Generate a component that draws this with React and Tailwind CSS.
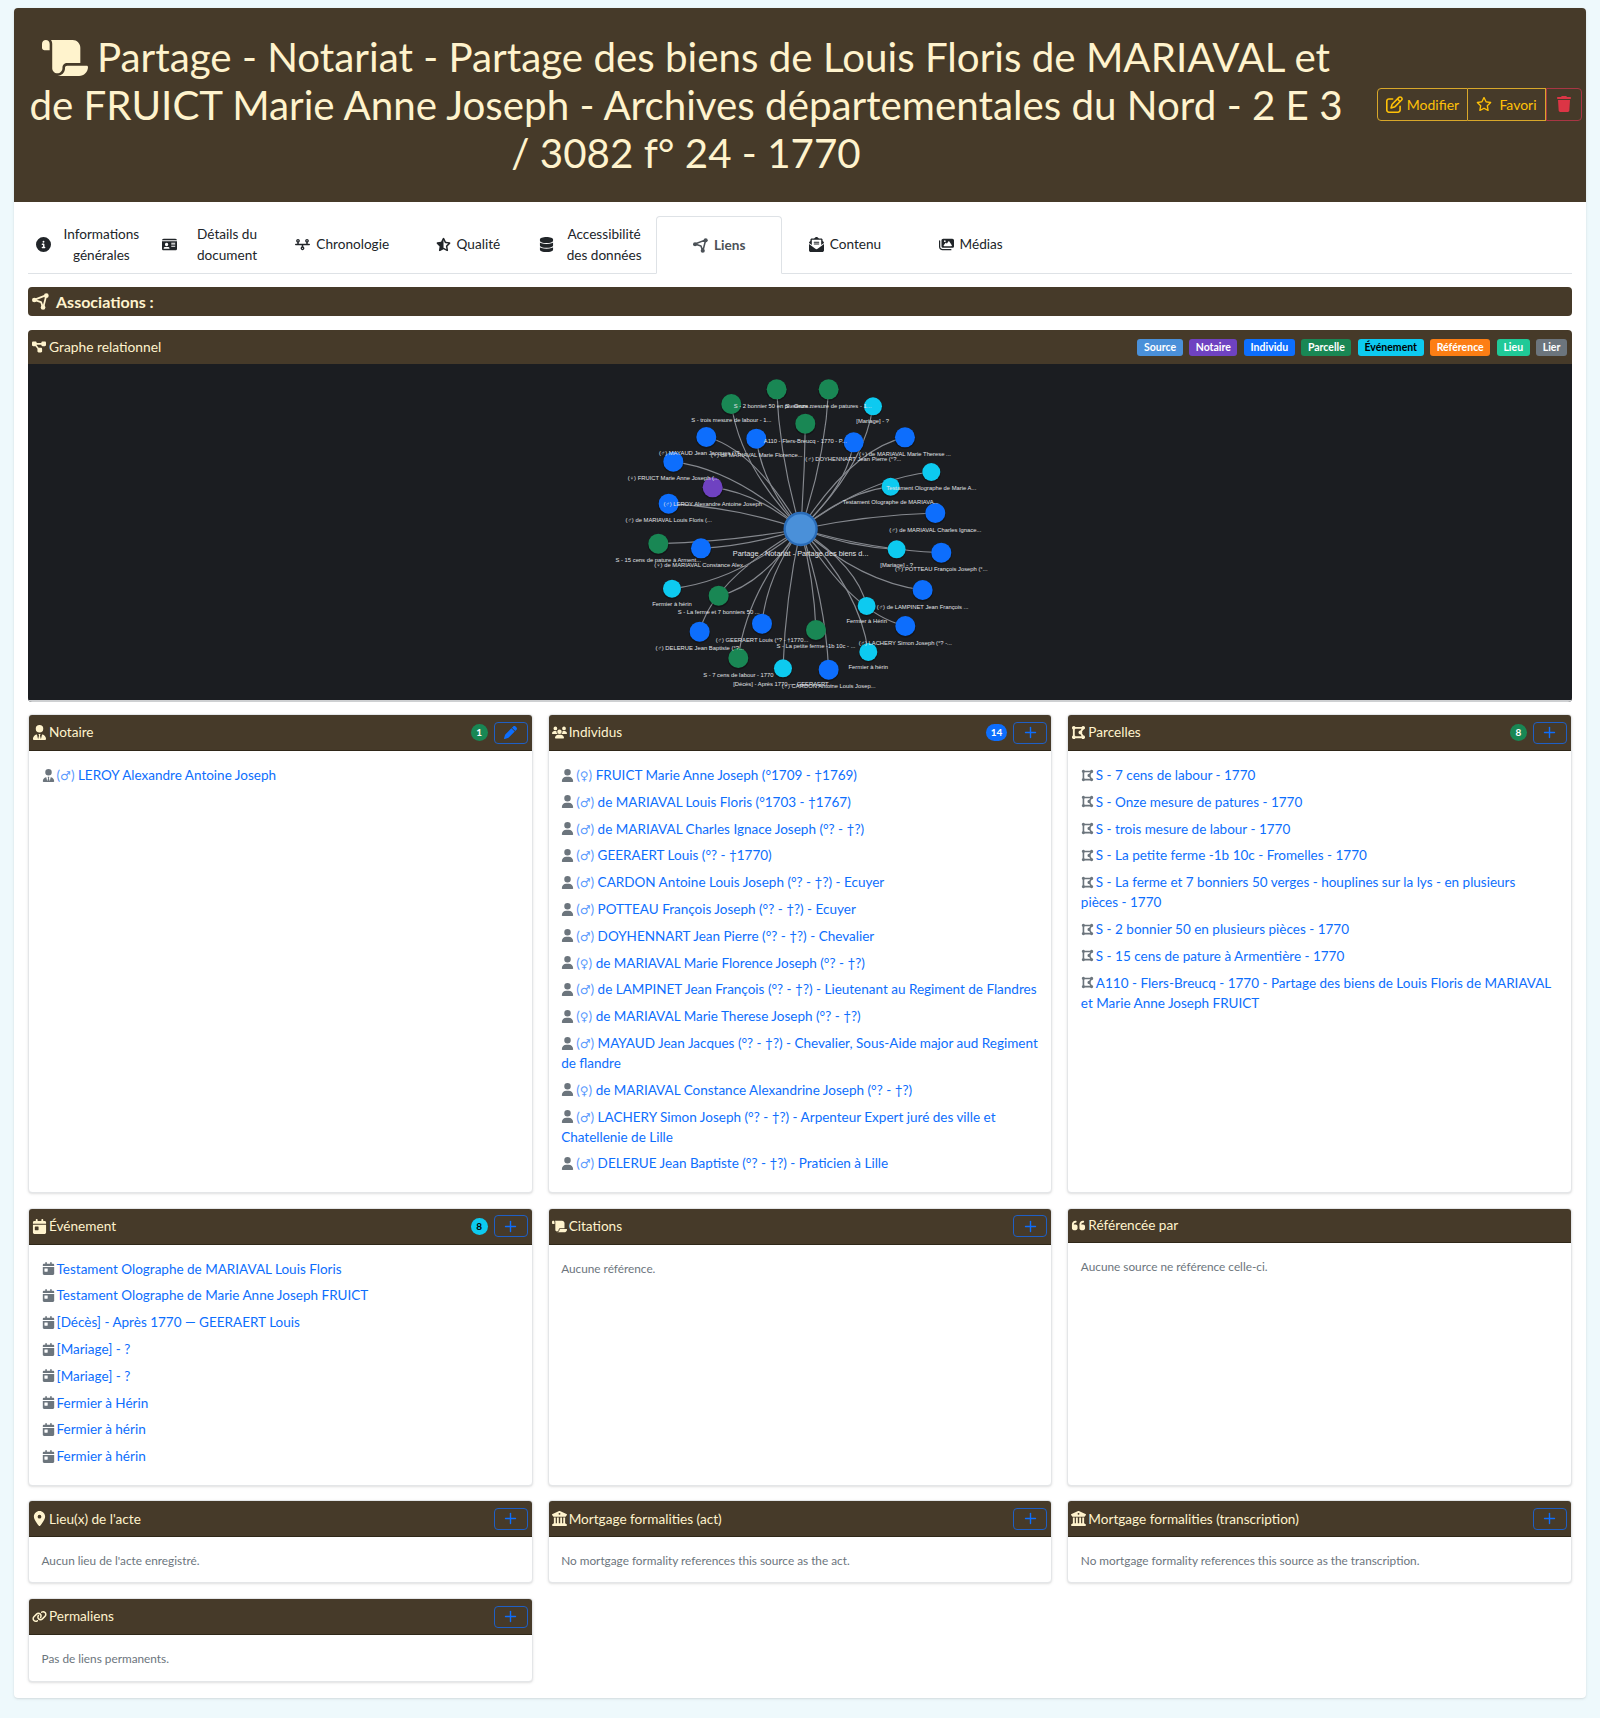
import {
  FaScroll, FaCircleInfo, FaIdCard, FaTimeline, FaStarHalfStroke, FaDatabase, FaDrawPolygon,
  FaEnvelopeOpenText, FaImages, FaDiagramProject, FaUserTie, FaUsers, FaUser, FaCalendarDay,
  FaQuoteLeft, FaLocationDot, FaBuildingColumns, FaLink, FaPen, FaTrash, FaRegStar, FaRegPenToSquare,
} from 'react-icons/fa6';
import { Plus } from 'lucide-react';

const sans = "font-['Lato','Open_Sans',sans-serif]";

// triangle with heavy corners, used for the "Liens" tab and section bar
const LinksIcon = ({ className = '' }) => (
  <svg className={className} width="1em" height="1em" viewBox="0 0 16 16" fill="none">
    <path d="M13.5 2 2 6.5l6.5 2 2 5.5z" stroke="currentColor" strokeWidth="1.7" strokeLinejoin="round" />
    <circle cx="13.5" cy="2.5" r="2.2" fill="currentColor" />
    <circle cx="2.2" cy="6.6" r="2.2" fill="currentColor" />
    <circle cx="10.4" cy="13.6" r="2.2" fill="currentColor" />
  </svg>
);

const tabs = [
  { icon: FaCircleInfo, label: ['Informations', 'générales'] },
  { icon: FaIdCard, label: ['Détails du', 'document'] },
  { icon: FaTimeline, label: ['Chronologie'] },
  { icon: FaStarHalfStroke, label: ['Qualité'] },
  { icon: FaDatabase, label: ['Accessibilité', 'des données'] },
  { icon: LinksIcon, label: ['Liens'], active: true },
  { icon: FaEnvelopeOpenText, label: ['Contenu'] },
  { icon: FaImages, label: ['Médias'] },
];

const badges = [
  ['Source', 'bg-[#4a90d9] text-white'],
  ['Notaire', 'bg-[#6f42c1] text-white'],
  ['Individu', 'bg-[#0d6efd] text-white'],
  ['Parcelle', 'bg-[#198754] text-white'],
  ['Événement', 'bg-[#0dcaf0] text-black'],
  ['Référence', 'bg-[#fd7e14] text-white'],
  ['Lieu', 'bg-[#20c997] text-white'],
  ['Lier', 'bg-[#6c757d] text-white'],
];

const BLUE = '#0d6efd';
const GREEN = '#198754';
const CYAN = '#0dcaf0';
const PURPLE = '#6f42c1';

// coordinates are in 3x units, relative to the graph crop
const nodes = [
  [530, 73, GREEN, 'S - 2 bonnier 50 en plusieurs...', 520, 122],
  [686, 73, GREEN, 'S - Onze mesure de patures - 1...', 685, 122],
  [394, 117, GREEN, 'S - trois mesure de labour - 1...', 394, 166],
  [819, 124, CYAN, '[Mariage] - ?', 818, 169],
  [616, 176, GREEN, 'A110 - Flers-Breucq - 1770 - P...', 616, 227],
  [319, 216, BLUE, '(♂) MAYAUD Jean Jacques (°?...', 305, 265],
  [469, 221, BLUE, '(♀) de MARIAVAL Marie Florence...', 470, 269],
  [761, 232, BLUE, '(♂) DOYHENNART Jean Pierre (°?...', 760, 283],
  [915, 217, BLUE, '(♀) de MARIAVAL Marie Therese ...', 915, 267],
  [220, 290, BLUE, '(♀) FRUICT Marie Anne Joseph (...', 220, 340],
  [994, 321, CYAN, 'Testament Olographe de Marie A...', 994, 368],
  [338, 367, PURPLE, '(♂) LEROY Alexandre Antoine Joseph', 338, 418],
  [872, 365, CYAN, 'Testament Olographe de MARIAVA...', 872, 411],
  [206, 416, BLUE, '(♂) de MARIAVAL Louis Floris (...', 206, 466],
  [1006, 444, BLUE, '(♂) de MARIAVAL Charles Ignace...', 1006, 494],
  [175, 536, GREEN, 'S - 15 cens de pature à Arment...', 175, 584],
  [303, 550, BLUE, '(♀) de MARIAVAL Constance Alex...', 303, 599],
  [890, 553, CYAN, '[Mariage] - ?', 890, 600],
  [1024, 563, BLUE, '(♂) POTTEAU François Joseph (°...', 1024, 612],
  [216, 671, CYAN, 'Fermier à hérin', 216, 717],
  [968, 675, BLUE, '(♂) de LAMPINET Jean François ...', 968, 725],
  [356, 692, GREEN, 'S - La ferme et 7 bonniers 50 ...', 356, 742],
  [800, 723, CYAN, 'Fermier à Hérin', 800, 768],
  [486, 776, BLUE, '(♂) GEERAERT Louis (°? - †1770...', 486, 826],
  [916, 783, BLUE, '(♂) LACHERY Simon Joseph (°? -...', 916, 833],
  [648, 795, GREEN, 'S - La petite ferme -1b 10c - ...', 648, 844],
  [299, 800, BLUE, '(♂) DELERUE Jean Baptiste (°?...', 299, 849],
  [805, 861, CYAN, 'Fermier à hérin', 805, 906],
  [415, 879, GREEN, 'S - 7 cens de labour - 1770', 415, 929],
  [549, 910, CYAN, '[Décès] - Après 1770 — GEERAERT...', 549, 957],
  [686, 914, BLUE, '(♂) CARDON Antoine Louis Josep...', 686, 964],
];

const CX = 602;
const CY = 492;

const edgePath = (x, y) => {
  const dx = CX - x;
  const dy = CY - y;
  const mx = x + dx / 2;
  const my = y + dy / 2;
  // edges leave the outer node along their dominant axis
  const ax = Math.abs(dx) > Math.abs(dy) ? mx : x;
  const ay = Math.abs(dx) > Math.abs(dy) ? y : my;
  const qx = mx * 0.25 + ax * 0.75;
  const qy = my * 0.25 + ay * 0.75;
  return `M${x} ${y} Q${qx} ${qy} ${CX} ${CY}`;
};

const Graph = () => (
  <svg className="block w-full h-[336px]" viewBox="0 0 1544 336">
    <g transform="translate(572 1) scale(0.3333)">
      {nodes.map(([x, y], i) => (
        <path key={i} d={edgePath(x, y)} fill="none" stroke="#85888e" strokeWidth="3.5" />
      ))}
      {nodes.map(([x, y, color], i) => (
        <g key={i}>
          <circle cx={x} cy={y + 3} r={color === CYAN ? 29 : 32} fill="#000" opacity="0.25" />
          <circle cx={x} cy={y} r={color === CYAN ? 27 : 30} fill={color} />
        </g>
      ))}
      <circle cx={CX} cy={CY} r="48" fill="#4a90d9" stroke="#2a6cb8" strokeWidth="7" />
      {nodes.map(([x, y, color, label, lx, ly], i) => (
        <text key={i} x={lx} y={ly + 6} textAnchor="middle" fontSize="17.5" fill="#e0e2e6" fontFamily="'Liberation Sans', 'DejaVu Sans', sans-serif">
          {label}
        </text>
      ))}
      <text x={CX} y={573} textAnchor="middle" fontSize="22" fill="#e4e6ea" fontFamily="'Liberation Sans', sans-serif">
        Partage - Notariat - Partage des biens d...
      </text>
    </g>
  </svg>
);

const Sex = ({ s = '♂' }) => (
  <span className="opacity-70">
    (<span className="font-['DejaVu_Sans',sans-serif] text-[12px] leading-[0]">{s}</span>)
  </span>
);

const LinkRow = ({ icon: Icon, children }) => (
  <li className="mb-[6.8px] leading-5 text-[#0d6efd]">
    <Icon className="inline-block mr-[2px] -mt-[3px] text-[13px] text-[#6c757d]" />
    {children}
  </li>
);

const AddBtn = ({ pen }) => (
  <span className="flex items-center justify-center w-[34px] h-[22px] rounded border border-[#1f5fc4] text-[#0d6efd]">
    {pen ? <FaPen className="text-[13px]" /> : <Plus size={17} strokeWidth={2} />}
  </span>
);

const Panel = ({ icon: Icon, title, count, countClass, pen, noBtn, className = '', headClass = 'h-9', children }) => (
  <div className={`flex flex-col rounded border border-[#e4e6e8] bg-white shadow-sm overflow-hidden ${className}`}>
    <div className={`flex items-center justify-between ${headClass} shrink-0 pl-[3px] pr-[4px] bg-[#463a29] text-[#fff3cd] border-b border-[#2f2718]`}>
      <div className="flex items-center gap-[2px] text-[13.6px]">
        <Icon className="text-[15px]" />
        <span>{title}</span>
      </div>
      <div className="flex items-center gap-[6px]">
        {count && (
          <span className={`flex items-center justify-center h-[17px] min-w-[17px] px-[5px] rounded-full text-[10px] font-bold ${countClass}`}>
            {count}
          </span>
        )}
        {!noBtn && <AddBtn pen={pen} />}
      </div>
    </div>
    <div className="flex-1 px-[12.5px] pt-[14px] pb-[10px] text-[13.5px]">{children}</div>
  </div>
);

const Empty = ({ children }) => <p className="text-[11.8px] leading-5 text-[#6c757d]">{children}</p>;

const individus = [
  ['♀', 'FRUICT Marie Anne Joseph (°1709 - †1769)'],
  ['♂', 'de MARIAVAL Louis Floris (°1703 - †1767)'],
  ['♂', 'de MARIAVAL Charles Ignace Joseph (°? - †?)'],
  ['♂', 'GEERAERT Louis (°? - †1770)'],
  ['♂', 'CARDON Antoine Louis Joseph (°? - †?) - Ecuyer'],
  ['♂', 'POTTEAU François Joseph (°? - †?) - Ecuyer'],
  ['♂', 'DOYHENNART Jean Pierre (°? - †?) - Chevalier'],
  ['♀', 'de MARIAVAL Marie Florence Joseph (°? - †?)'],
  ['♂', 'de LAMPINET Jean François (°? - †?) - Lieutenant au Regiment de Flandres'],
  ['♀', 'de MARIAVAL Marie Therese Joseph (°? - †?)'],
  ['♂', 'MAYAUD Jean Jacques (°? - †?) - Chevalier, Sous-Aide major aud Regiment de flandre'],
  ['♀', 'de MARIAVAL Constance Alexandrine Joseph (°? - †?)'],
  ['♂', 'LACHERY Simon Joseph (°? - †?) - Arpenteur Expert juré des ville et Chatellenie de Lille'],
  ['♂', 'DELERUE Jean Baptiste (°? - †?) - Praticien à Lille'],
];

const parcelles = [
  'S - 7 cens de labour - 1770',
  'S - Onze mesure de patures - 1770',
  'S - trois mesure de labour - 1770',
  'S - La petite ferme -1b 10c - Fromelles - 1770',
  'S - La ferme et 7 bonniers 50 verges - houplines sur la lys - en plusieurs pièces\u00a0-\u00a01770',
  'S - 2 bonnier 50 en plusieurs pièces - 1770',
  'S - 15 cens de pature à Armentière - 1770',
  'A110 - Flers-Breucq - 1770 - Partage des biens de Louis Floris de MARIAVAL et Marie Anne Joseph FRUICT',
];

const evenements = [
  'Testament Olographe de MARIAVAL Louis Floris',
  'Testament Olographe de Marie Anne Joseph FRUICT',
  '[Décès] - Après 1770 — GEERAERT Louis',
  '[Mariage] - ?',
  '[Mariage] - ?',
  'Fermier à Hérin',
  'Fermier à hérin',
  'Fermier à hérin',
];

export default function App() {
  return (
    <div className={`min-h-[1718px] bg-[#eef9fc] pt-[8px] px-[14px] ${sans}`}>
      <div className="h-[1690px] bg-white rounded shadow-sm">
        <header className="flex items-center h-[194px] bg-[#463a29] rounded-t">
          <h1 className="w-[1344px] px-[10px] text-center text-[40.3px] leading-[48px] text-[#fff3cd]">
            <FaScroll className="inline-block mr-[9px] -mt-[8px] text-[46px]" />
            Partage - Notariat - Partage des biens de Louis Floris de MARIAVAL et de FRUICT Marie Anne Joseph - Archives départementales du Nord - 2 E 3 / 3082 f° 24 - 1770
          </h1>
          <div className="flex ml-[19px] -mt-[2px] h-[33px] text-[14px]">
            <span className="flex items-center justify-center gap-[4px] w-[91px] rounded-l border border-[#d8a72a] text-[#ffc107]">
              <FaRegPenToSquare className="text-[17px]" /> Modifier
            </span>
            <span className="flex items-center justify-center gap-[7px] w-[78px] border-y border-r border-[#d8a72a] text-[#ffc107]">
              <FaRegStar className="text-[16px]" /> Favori
            </span>
            <span className="flex items-center justify-center w-[36px] rounded-r border border-[#a83644] text-[#dc3545]">
              <FaTrash className="text-[16px]" />
            </span>
          </div>
        </header>

        <div className="px-[14px]">
          <nav className="flex h-[58px] mt-[14px] border-b border-[#dee2e6] text-[13.6px] leading-[20.5px] text-[#212529]">
            {tabs.map(({ icon: Icon, label, active }) => (
              <div
                key={label[0]}
                className={`flex items-center justify-center gap-[6px] w-[125.7px] ${active ? 'h-[58px] rounded-t border border-b-white border-[#dee2e6] bg-white font-bold text-[#4b5157]' : ''}`}
              >
                <Icon className="shrink-0 text-[15px]" />
                <span className={`text-center whitespace-nowrap ${label.length > 1 ? 'w-[88px]' : ''}`}>
                  {label.map(l => <div key={l}>{l}</div>)}
                </span>
              </div>
            ))}
          </nav>

          <div className="flex items-center gap-[7px] h-[29px] mt-[13px] px-[4px] rounded bg-[#463a29] text-[16px] font-bold text-[#fff3cd]">
            <LinksIcon className="text-[17px]" />
            Associations :
          </div>

          <div className="mt-[14px] rounded overflow-hidden">
            <div className="flex items-center justify-between h-[34px] pl-[4px] pr-[5px] bg-[#463a29] text-[#fff3cd] text-[13.8px]">
              <div className="flex items-center gap-[3px]">
                <FaDiagramProject className="text-[14px]" />
                Graphe relationnel
              </div>
              <div className="flex gap-[6.5px]">
                {badges.map(([name, cls]) => (
                  <span key={name} className={`px-[6.6px] h-[17px] leading-[17px] rounded-[3px] text-[10.5px] font-bold ${cls}`}>
                    {name}
                  </span>
                ))}
              </div>
            </div>
            <div className="bg-[#1b1d21] border-b-2 border-[#ced0d2]">
              <Graph />
            </div>
          </div>

          <div className="grid grid-cols-3 gap-x-[15px] gap-y-[14.7px] mt-[12px]">
            <Panel icon={FaUserTie} title="Notaire" count="1" countClass="bg-[#198754] text-white" pen className="h-[479px]">
              <ul>
                <LinkRow icon={FaUserTie}><Sex /> LEROY Alexandre Antoine Joseph</LinkRow>
              </ul>
            </Panel>
            <Panel icon={FaUsers} title="Individus" count="14" countClass="bg-[#0d6efd] text-white">
              <ul>
                {individus.map(([s, name]) => (
                  <LinkRow key={name} icon={FaUser}><Sex s={s} /> {name}</LinkRow>
                ))}
              </ul>
            </Panel>
            <Panel icon={FaDrawPolygon} title="Parcelles" count="8" countClass="bg-[#198754] text-white">
              <ul>
                {parcelles.map(p => <LinkRow key={p} icon={FaDrawPolygon}>{p}</LinkRow>)}
              </ul>
            </Panel>

            <Panel icon={FaCalendarDay} title="Événement" count="8" countClass="bg-[#0dcaf0] text-black" className="h-[278px]">
              <ul>
                {evenements.map((e, i) => <LinkRow key={i} icon={FaCalendarDay}>{e}</LinkRow>)}
              </ul>
            </Panel>
            <Panel icon={FaScroll} title="Citations">
              <Empty>Aucune référence.</Empty>
            </Panel>
            <Panel icon={FaQuoteLeft} title="Référencée par" noBtn headClass="h-[34px]">
              <Empty>Aucune source ne référence celle-ci.</Empty>
            </Panel>

            <Panel icon={FaLocationDot} title="Lieu(x) de l'acte" className="h-[83px]">
              <Empty>Aucun lieu de l'acte enregistré.</Empty>
            </Panel>
            <Panel icon={FaBuildingColumns} title="Mortgage formalities (act)">
              <Empty>No mortgage formality references this source as the act.</Empty>
            </Panel>
            <Panel icon={FaBuildingColumns} title="Mortgage formalities (transcription)">
              <Empty>No mortgage formality references this source as the transcription.</Empty>
            </Panel>

            <Panel icon={FaLink} title="Permaliens" className="h-[84px]">
              <Empty>Pas de liens permanents.</Empty>
            </Panel>
          </div>
        </div>
      </div>
    </div>
  );
}
